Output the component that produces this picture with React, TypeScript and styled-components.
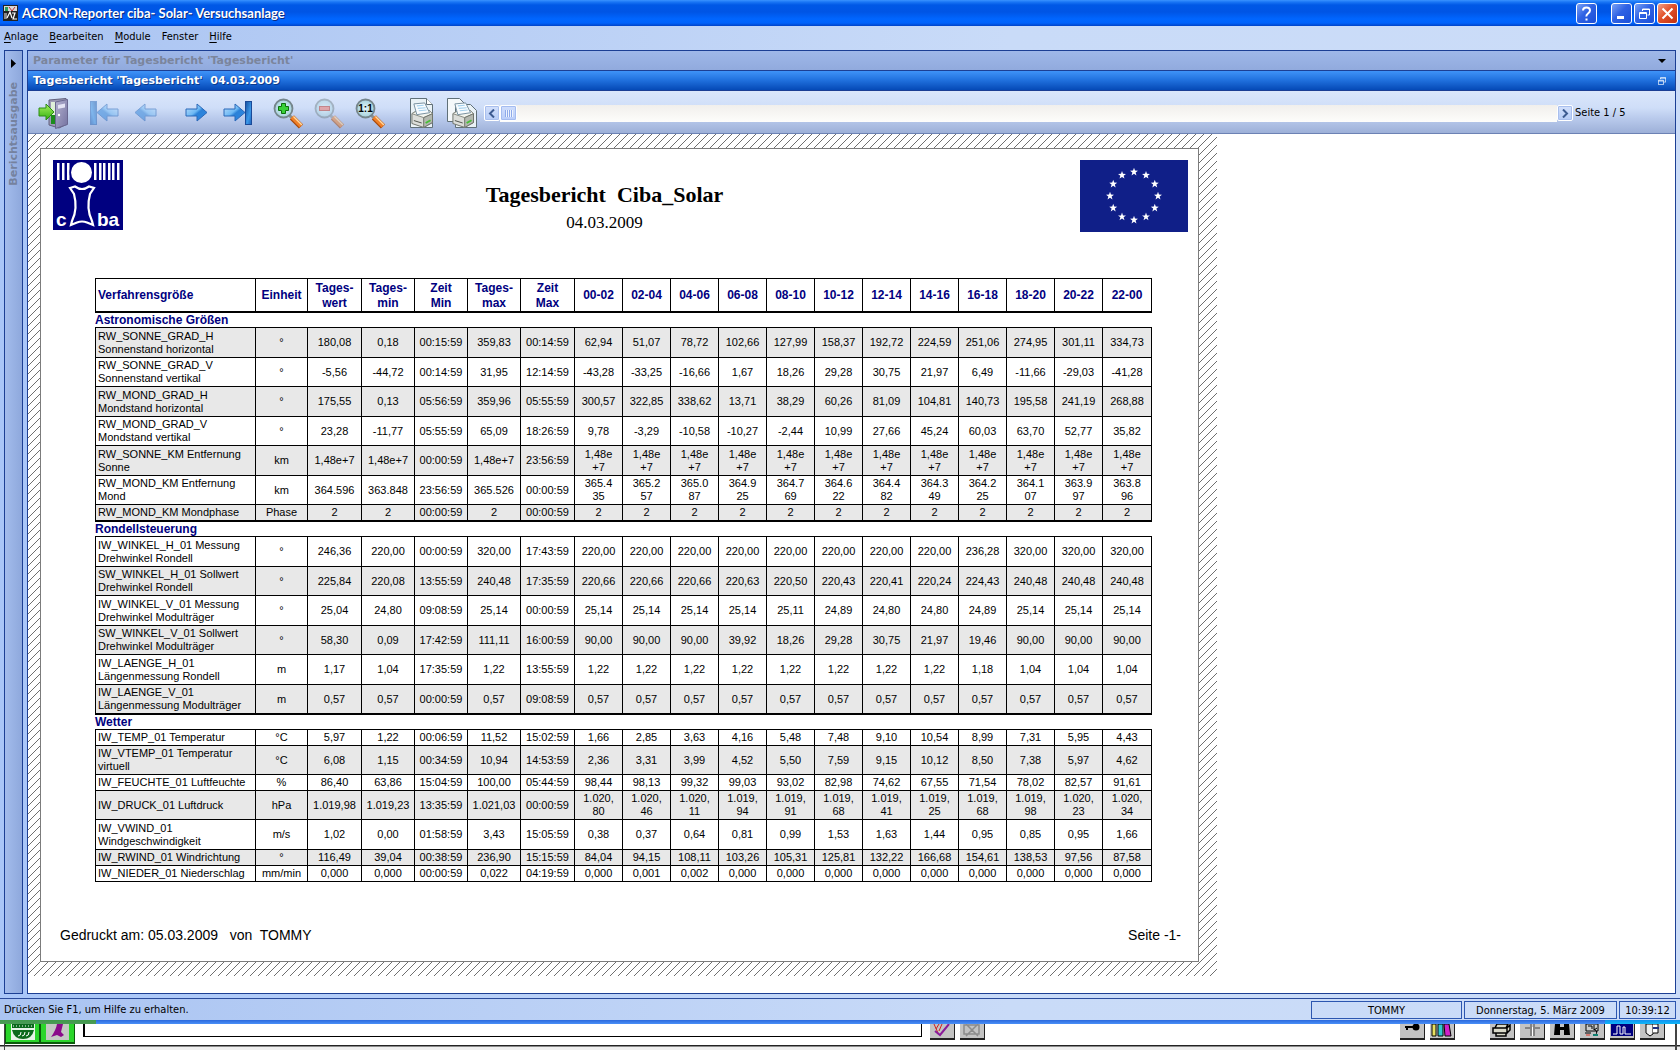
import React from 'react';
import styled, { createGlobalStyle, css } from 'styled-components';

const UI = "'DejaVu Sans Condensed', 'DejaVu Sans', sans-serif";
const CAPTION = "'DejaVu Sans', sans-serif";
const ARIAL = "'Liberation Sans', Arial, sans-serif";
const TIMES = "'Liberation Serif', 'Times New Roman', serif";
const LINE = '#1c3f94';

const GlobalStyle = createGlobalStyle`
  *, *::before, *::after { box-sizing: border-box; }
  html, body { margin: 0; height: 100%; overflow: hidden; }
  body { font: 11px/14px ${ARIAL}; color: #000; background: #fff; }
  button { font: inherit; color: inherit; margin: 0; padding: 0; border: 0; background: none; }
  svg { display: block; }
`;

const Screen = styled.div`
  display: flex;
  flex-direction: column;
  height: 100vh;
`;

/* ---------- window frame ---------- */

const TitleBar = styled.header`
  display: flex;
  align-items: center;
  flex: none;
  height: 26px;
  padding: 0 2px 0 3px;
  gap: 4px;
  background: linear-gradient(#3a93ff 0, #1a76f5 2px, #0058e6 5px, #0055e5 12px, #0066ff 19px, #0062fb 23px, #0043c8 26px);
`;

const WindowTitle = styled.h1`
  flex: 1;
  margin: 0;
  font: bold 13px/20px Lato, 'Open Sans', sans-serif;
  color: #fff;
  text-shadow: 1px 1px 0 #0a2a80;
`;

const WindowButtons = styled.div`
  display: flex;
  gap: 2px;
`;

const WindowButton = styled.button<{ $kind?: 'help' | 'close' }>`
  display: grid;
  place-items: center;
  width: 21px;
  height: 21px;
  border: 1px solid #fff;
  border-radius: 3px;
  color: #fff;
  background: ${(p) =>
    p.$kind === 'close'
      ? 'linear-gradient(135deg, #f0a088, #e2512a 45%, #c03010)'
      : 'linear-gradient(135deg, #7ba2f5, #2f62e4 45%, #1b4fd8)'};
  ${(p) => p.$kind === 'help' && css`margin-right: 12px;`}
`;

const MenuBar = styled.nav`
  display: flex;
  align-items: center;
  flex: none;
  gap: 11px;
  height: 24px;
  padding: 0 4px 3px;
  background: linear-gradient(90deg, #aac4f2, #c9dbf8 60%, #cbdcf8);
`;

const MenuItem = styled.button`
  font: 11px/16px ${UI};
  u { text-underline-offset: 2px; }
`;

const Workspace = styled.main`
  display: flex;
  flex: 1;
  min-height: 0;
  gap: 4px;
  padding: 0 4px 4px;
  background: linear-gradient(90deg, #a9c6f8, #c9dbf8 60%, #cbdcf8);
`;

const SideTab = styled.button`
  display: flex;
  flex-direction: column;
  align-items: center;
  flex: none;
  gap: 14px;
  width: 19px;
  padding: 8px 0;
  border: 1px solid ${LINE};
  background: linear-gradient(90deg, #a3bcec, #8ea8dc);
`;

const SideLabel = styled.span`
  writing-mode: vertical-rl;
  transform: rotate(180deg);
  font: bold 11px/14px ${CAPTION};
  color: #75829f;
`;

const Panel = styled.section`
  display: flex;
  flex: 1;
  flex-direction: column;
  min-width: 0;
  border: 1px solid ${LINE};
  background: #fff;
`;

const Caption = styled.div<{ $active?: boolean }>`
  display: flex;
  align-items: center;
  justify-content: space-between;
  flex: none;
  height: 20px;
  padding: 0 8px 0 5px;
  border-bottom: 1px solid ${LINE};
  font: bold 11px/14px ${CAPTION};
  white-space: pre;
  color: ${(p) => (p.$active ? '#fff' : '#7b859c')};
  text-shadow: ${(p) => (p.$active ? '1px 1px 0 #0b3a8c' : 'none')};
  background: ${(p) =>
    p.$active ? 'linear-gradient(#3f93f8, #2273e0 45%, #0549b6)' : 'linear-gradient(#9fb8e9, #91aadd)'};
`;

const CaptionButton = styled.button`
  display: grid;
  place-items: center;
  width: 10px;
  height: 12px;
`;

/* ---------- toolbar ---------- */

const Toolbar = styled.div`
  display: flex;
  align-items: center;
  flex: none;
  gap: 10px;
  height: 43px;
  padding: 2px 51px 0 5px;
  border-bottom: 1px solid #6c82b4;
  background: linear-gradient(#dbe7fb, #cfdef8 40%, #b9caec 65%, #9db0d8);
`;

const ToolGroup = styled.div`
  display: flex;
  flex: none;
`;

const ToolButton = styled.button`
  display: grid;
  place-items: center;
  width: 41px;
  height: 36px;
  &:disabled { opacity: 0.5; }
`;

const Pager = styled.div`
  display: flex;
  align-items: center;
  flex: 1;
  margin-left: -9px;
`;

const ScrollButton = styled.button`
  display: grid;
  place-items: center;
  flex: none;
  width: 16px;
  height: 16px;
  border: 1px solid #fff;
  border-radius: 2px;
  background: linear-gradient(#d3e0fc, #b5cbf6);
  box-shadow: inset 0 0 0 1px #a9bfee;
`;

const PageSlider = styled.input`
  flex: 1;
  min-width: 0;
  height: 17px;
  margin: 0;
  appearance: none;
  background: linear-gradient(#f1efec, #fdfdfb);
  &::-webkit-slider-thumb {
    appearance: none;
    width: 17px;
    height: 16px;
    border: 1px solid #fff;
    border-radius: 2px;
    background:
      repeating-linear-gradient(90deg, #8eaaea 0 1px, #eef4fe 1px 2px) center / 8px 7px no-repeat,
      linear-gradient(#d0defc, #b9cdf9);
    box-shadow: inset 0 0 0 1px #a4bcf0;
  }
`;

const PageCount = styled.output`
  flex: none;
  width: 49px;
  margin-left: 2px;
  font: 11px/14px ${UI};
  white-space: nowrap;
`;

/* ---------- report sheet ---------- */

const Viewport = styled.div`
  flex: 1;
  min-height: 0;
  overflow: hidden;
  background: #fff;
`;

const Desk = styled.div`
  width: 1189px;
  padding: 14px 18px 14px 12px;
  background: linear-gradient(135deg, transparent 45%, #6f6f6f 45% 55%, transparent 55%) 0 0 / 8px 8px #fff;
`;

const Sheet = styled.article`
  padding: 11px 10px 16px 12px;
  border: 1px solid #7c7c7c;
  background: #fff;
`;

const SheetHeader = styled.header`
  display: flex;
  align-items: flex-start;
  justify-content: space-between;
  height: 118px;
`;

const Heading = styled.div`
  padding: 21px 0 0 6px;
  text-align: center;
`;

const ReportTitle = styled.h2`
  margin: 0;
  font: bold 22px/28px ${TIMES};
  white-space: pre;
`;

const ReportDate = styled.p`
  margin: 0;
  font: 17px/28px ${TIMES};
`;

const Report = styled.table`
  table-layout: fixed;
  width: 1057px;
  margin-left: 42px;
  border-spacing: 0;
  font: 11px/13px ${ARIAL};
`;

const Col = styled.col<{ $w: number }>`
  width: ${(p) => p.$w}px;
`;

const HeadCell = styled.th`
  height: 35px;
  padding: 1px 0 0;
  border: solid #000;
  border-width: 1px 1px 2px 0;
  font: bold 12px/15px ${ARIAL};
  color: #000080;
  white-space: pre-line;
  &:first-child {
    padding-left: 2px;
    border-left-width: 1px;
    text-align: left;
  }
`;

const GroupTitle = styled.th`
  height: 15px;
  padding: 0;
  border-bottom: 1px solid #000;
  font: bold 12px/14px ${ARIAL};
  color: #000080;
  text-align: left;
`;

const Cell = styled.td`
  padding: 0;
  border: solid #000;
  border-width: 0 1px 1px 0;
  text-align: center;
  white-space: pre-line;
`;

const NameCell = styled.th`
  padding: 0 0 0 2px;
  border: solid #000;
  border-width: 0 1px 1px 1px;
  font-weight: normal;
  text-align: left;
  white-space: pre-line;
`;

const Row = styled.tr<{ $height: number; $shaded: boolean; $closing: boolean }>`
  height: ${(p) => p.$height}px;
  background: ${(p) => (p.$shaded ? '#e8e8e8' : '#fff')};
  ${(p) => p.$closing && css`
    ${Cell}, ${NameCell} { border-bottom-width: 2px; }
  `}
`;

const SheetFooter = styled.footer`
  display: flex;
  justify-content: space-between;
  padding: 43px 7px 0 7px;
  font: 14px/20px ${ARIAL};
  white-space: pre;
`;

/* ---------- status bar and the window behind ---------- */

const StatusBar = styled.footer`
  display: flex;
  align-items: center;
  flex: none;
  gap: 2px;
  height: 22px;
  padding: 0 4px;
  border-top: 1px solid #2a4a9a;
  font: 11px/14px ${UI};
  background: linear-gradient(90deg, #aac4f2, #c9dbf8 60%, #cbdcf8);
`;

const StatusHint = styled.span`
  flex: 1;
`;

const StatusCell = styled.span<{ $w: number }>`
  width: ${(p) => p.$w}px;
  height: 18px;
  border: 1px solid #2c56b0;
  line-height: 17px;
  text-align: center;
`;

const FrameEdge = styled.div`
  flex: none;
  height: 4px;
  background:
    linear-gradient(#3f9a4a, #4c9a58) left / 96px 100% no-repeat,
    linear-gradient(#1090f0, #10b8f8) right / 75px 100% no-repeat,
    linear-gradient(#2a68dc, #4a90f8);
`;

const BackWindow = styled.div`
  display: flex;
  flex: none;
  height: 26px;
  padding: 0 3px 0 4px;
  background: linear-gradient(#fff 0 21px, #222 21px 22px, #8a8a8a 22px 23px, #eee 23px);
`;

const BackFrame = styled.div`
  display: flex;
  flex: 1;
  padding-right: 10px;
  border: solid #444;
  border-width: 0 2px 0 1px;
`;

const GreenButton = styled.button`
  display: flex;
  justify-content: center;
  width: 35px;
  height: 20px;
  border: solid #0a5a0a;
  border-width: 0 1px 2px;
  background: #2bd52b;
`;

const BackField = styled.input`
  flex: 0 1 839px;
  min-width: 0;
  height: 13px;
  margin: 0 8px;
  padding: 0;
  border: solid #000;
  border-width: 0 1px 1px 2px;
  background: #fff;
`;

const BackTools = styled.div<{ $end?: boolean; $apart?: boolean }>`
  display: flex;
  gap: 5px;
  ${(p) => p.$end && css`margin-left: auto;`}
  ${(p) => p.$apart && css`margin-left: 35px;`}
`;

const BackButton = styled.button`
  display: flex;
  justify-content: center;
  width: 25px;
  height: 16px;
  border: solid #222;
  border-width: 0 1px 2px 0;
  background: #c3c3c3;
`;

/* ---------- drawings ---------- */

const RightArrow = ({ x = 0 }: { x?: number }) => (
  <path d={`M${x} 9h11V4l10 8.500-10 8.500v-5h-11z`} fill="url(#arrowFill)" stroke="#2a68b8" />
);

const Defs = () => (
  <svg width="0" height="0" style={{ position: 'absolute' }} aria-hidden="true">
    <defs>
      <linearGradient id="arrowFill" x1="0" y1="0" x2="1" y2="1">
        <stop offset="0" stopColor="#c4e2fc" />
        <stop offset=".45" stopColor="#6cb8f4" />
        <stop offset=".55" stopColor="#2c82d8" />
        <stop offset="1" stopColor="#2c88e4" />
      </linearGradient>
      <linearGradient id="barFill" x1="0" y1="0" x2="1" y2="1">
        <stop offset="0" stopColor="#1450a0" />
        <stop offset=".6" stopColor="#3c98e8" />
        <stop offset="1" stopColor="#1c60b8" />
      </linearGradient>
      <linearGradient id="doorFill" x1="0" y1="0" x2="1" y2="1">
        <stop offset="0" stopColor="#b4b2d0" />
        <stop offset="1" stopColor="#7472a0" />
      </linearGradient>
      <linearGradient id="greenFill" x1="0" y1="0" x2="0" y2="1">
        <stop offset="0" stopColor="#a8f060" />
        <stop offset="1" stopColor="#30b010" />
      </linearGradient>
      <radialGradient id="lensFill">
        <stop offset="0" stopColor="#e4f6f8" />
        <stop offset="1" stopColor="#a4d0dc" />
      </radialGradient>
    </defs>
  </svg>
);

const ExitIcon = () => (
  <svg width="31" height="31" viewBox="0 0 31 31">
    <path d="M11 2l17-1.500 1 1.500v24l-8 4-10-3z" fill="#9c9ab4" stroke="#62607c" />
    <path d="M13 4h6v22h-6z" fill="#dff0d8" />
    <path d="M13 17h5v9h-5z" fill="#1c8c1c" />
    <path d="M17.500 4l12-2.500v25l-12 4z" fill="url(#doorFill)" stroke="#6a6890" />
    <path d="M20 7l7-1.500v4l-7 1.200z" fill="#e4e4f4" />
    <circle cx="21" cy="17" r="1.200" fill="#fff" />
    <path d="M1 10h7V6l8 8-8 8v-4H1z" fill="url(#greenFill)" stroke="#2c8c14" />
  </svg>
);

const FirstIcon = () => (
  <svg width="29" height="26" viewBox="0 0 29 26">
    <g transform="matrix(-1 0 0 1 29 0)">
      <RightArrow x={1} />
      <rect x="22.500" y="1.500" width="6" height="23" fill="url(#barFill)" stroke="#2a68b8" />
    </g>
  </svg>
);
const PrevIcon = () => (
  <svg width="23" height="26" viewBox="0 0 23 26">
    <g transform="matrix(-1 0 0 1 23 0)"><RightArrow x={1} /></g>
  </svg>
);
const NextIcon = () => (
  <svg width="23" height="26" viewBox="0 0 23 26"><RightArrow x={1} /></svg>
);
const LastIcon = () => (
  <svg width="29" height="26" viewBox="0 0 29 26">
    <RightArrow x={1} />
    <rect x="22.500" y="1.500" width="6" height="23" fill="url(#barFill)" stroke="#1a4a98" />
  </svg>
);

const LensIcon = ({ mark }: { mark: 'plus' | 'minus' | 'one' }) => (
  <svg width="31" height="31" viewBox="0 0 31 31">
    <path d="M16 17l4 4" stroke="#8a9090" strokeWidth="3" />
    <path d="M19 19.500l9 9" stroke="#a84808" strokeWidth="6" />
    <path d="M19 19l9 9" stroke="#f08028" strokeWidth="4" />
    <path d="M20.500 18.500l8.500 8.500" stroke="#fdd8a0" strokeWidth="1.500" />
    <circle cx="10.500" cy="10.500" r="9" fill="url(#lensFill)" stroke="#76868c" strokeWidth="1.800" />
    {mark === 'plus' && <path d="M8.500 5.500h4v3h3v4h-3v3h-4v-3h-3v-4h3z" fill="#38d038" stroke="#0c700c" />}
    {mark === 'minus' && <rect x="5.500" y="8.500" width="10" height="4" fill="#f07060" stroke="#b83020" />}
    {mark === 'one' && (
      <text x="10.500" y="14" textAnchor="middle" fontFamily="Liberation Sans, sans-serif" fontWeight="bold" fontSize="10">1:1</text>
    )}
  </svg>
);

const Printer = () => (
  <g>
    <path d="M4 15l5-3h13l3 3v9l-9 5-12-4z" fill="#dcdeda" stroke="#70746c" />
    <path d="M4 15l5-3h13l3 3-9 4z" fill="#f2f4ee" stroke="#888c84" />
    <path d="M6 5l11-1 5 10-13 2z" fill="#f8fcff" stroke="#7890a0" />
    <path d="M9 7l7-.6M10 9.500l8-.6M11 12l8-.8" stroke="#a4d0ec" strokeWidth="1.200" />
    <path d="M16 19v10l9-5v-9z" fill="#b4b8b0" stroke="#70746c" />
    <path d="M18 24.500l5-2.800" stroke="#48c038" strokeWidth="2" />
    <path d="M6 22l8 2.500" stroke="#50544c" />
  </g>
);
const PrintPageIcon = () => (
  <svg width="28" height="32" viewBox="0 0 28 32">
    <path d="M2.500 1.500h16l6 6v23h-22z" fill="#eaf2f6" stroke="#607078" />
    <path d="M18.500 1.500v6h6" fill="#fff" stroke="#607078" />
    <g transform="matrix(.98 0 0 .98 0 2)"><Printer /></g>
  </svg>
);
const PrintAllIcon = () => (
  <svg width="31" height="32" viewBox="0 0 31 32">
    <path d="M.5 1.500h12l5 5v18H.5z" fill="#f4f8fa" stroke="#607078" />
    <path d="M8.500 7.500h15l6 6v17h-21z" fill="#eaf2f6" stroke="#607078" />
    <g transform="matrix(.98 0 0 .98 2 2)"><Printer /></g>
  </svg>
);

const RestoreGlyph = ({ size }: { size: number }) => (
  <svg width={size} height={size} viewBox="0 0 11 11" fill="none" stroke="#fff">
    <path d="M3.500 3V1h7v6h-2M3 1.500h8" />
    <path d="M.5 4.500h7v6h-7zM.5 5.500h7" />
  </svg>
);

const AppIcon = () => (
  <svg width="15" height="16" viewBox="0 0 15 16">
    <rect width="15" height="16" fill="#222" />
    <path d="M1 1h13v5H1z" fill="#d8d8d8" />
    <path d="M2 2h3v4H2z" fill="#2c9c5c" />
    <path d="M6 2l3 4 3-4" stroke="#c03030" fill="none" />
    <path d="M1 14V8h3v6z" fill="#888" />
    <path d="M4 13l3-6 2 6M9 8h3l-2 6h4" stroke="#fff" fill="none" strokeWidth="1.200" />
  </svg>
);

const CibaLogo = () => (
  <svg width="70" height="70" viewBox="0 0 70 70" role="img" aria-label="ciba">
    <rect width="70" height="70" fill="#000080" />
    <g fill="#fff">
      {[4, 9, 14, 41, 46, 50, 55, 59, 64].map((x) => (
        <rect key={x} x={x} y="3" width="2.500" height="17" />
      ))}
      <circle cx="28.500" cy="12.500" r="12" fill="#000080" />
      <circle cx="28.500" cy="12.500" r="10.500" />
      <g fontFamily="Liberation Sans, sans-serif" fontWeight="bold" fontSize="19">
        <text x="3" y="66">c</text>
        <text x="44" y="66">ba</text>
      </g>
    </g>
    <path
      d="M17 28l5-1.500q7 5 14 0l5 1.500-4 6q-4 15 2 27l1 4-6-2.500q-5-2-10 0l-6 2.500 1-4q6-12 2-27z"
      fill="none" stroke="#fff" strokeWidth="2.200"
    />
  </svg>
);

const star = (cx: number, cy: number) =>
  Array.from({ length: 10 }, (_, i) => {
    const r = i % 2 ? 1.7 : 4.2;
    const a = (i * Math.PI) / 5;
    return `${(cx + r * Math.sin(a)).toFixed(2)},${(cy - r * Math.cos(a)).toFixed(2)}`;
  }).join(' ');

const EuFlag = () => (
  <svg width="108" height="72" viewBox="0 0 108 72" role="img" aria-label="EU">
    <rect width="108" height="72" fill="#101f88" />
    {Array.from({ length: 12 }, (_, i) => (
      <polygon
        key={i}
        fill="#fff"
        points={star(54 + 24 * Math.sin((i * Math.PI) / 6), 36 - 24 * Math.cos((i * Math.PI) / 6))}
      />
    ))}
  </svg>
);

const Glyph = ({ children }: { children: React.ReactNode }) => (
  <svg width="22" height="14" viewBox="0 0 22 14">{children}</svg>
);

/* ---------- data ---------- */

type Group = { title: string; firstShaded: boolean; rows: string[] };

const HEAD = 'Verfahrensgröße|Einheit|Tages-\nwert|Tages-\nmin|Zeit\nMin|Tages-\nmax|Zeit\nMax|00-02|02-04|04-06|06-08|08-10|10-12|12-14|14-16|16-18|18-20|20-22|22-00'.split('|');

const COLS = [161, 52, 54, 53, 53, 53, 54, 48, 48, 48, 48, 48, 48, 48, 48, 48, 48, 48, 49];

const GROUPS: Group[] = [
  {
    title: 'Astronomische Größen',
    firstShaded: true,
    rows: [
      'RW_SONNE_GRAD_H\nSonnenstand horizontal|°|180,08|0,18|00:15:59|359,83|00:14:59|62,94|51,07|78,72|102,66|127,99|158,37|192,72|224,59|251,06|274,95|301,11|334,73',
      'RW_SONNE_GRAD_V\nSonnenstand vertikal|°|-5,56|-44,72|00:14:59|31,95|12:14:59|-43,28|-33,25|-16,66|1,67|18,26|29,28|30,75|21,97|6,49|-11,66|-29,03|-41,28',
      'RW_MOND_GRAD_H\nMondstand horizontal|°|175,55|0,13|05:56:59|359,96|05:55:59|300,57|322,85|338,62|13,71|38,29|60,26|81,09|104,81|140,73|195,58|241,19|268,88',
      'RW_MOND_GRAD_V\nMondstand vertikal|°|23,28|-11,77|05:55:59|65,09|18:26:59|9,78|-3,29|-10,58|-10,27|-2,44|10,99|27,66|45,24|60,03|63,70|52,77|35,82',
      'RW_SONNE_KM Entfernung\nSonne|km|1,48e+7|1,48e+7|00:00:59|1,48e+7|23:56:59' + '|1,48e\n+7'.repeat(12),
      'RW_MOND_KM Entfernung\nMond|km|364.596|363.848|23:56:59|365.526|00:00:59|365.4\n35|365.2\n57|365.0\n87|364.9\n25|364.7\n69|364.6\n22|364.4\n82|364.3\n49|364.2\n25|364.1\n07|363.9\n97|363.8\n96',
      'RW_MOND_KM Mondphase|Phase|2|2|00:00:59|2|00:00:59' + '|2'.repeat(12),
    ],
  },
  {
    title: 'Rondellsteuerung',
    firstShaded: false,
    rows: [
      'IW_WINKEL_H_01 Messung\nDrehwinkel Rondell|°|246,36|220,00|00:00:59|320,00|17:43:59|220,00|220,00|220,00|220,00|220,00|220,00|220,00|220,00|236,28|320,00|320,00|320,00',
      'SW_WINKEL_H_01 Sollwert\nDrehwinkel Rondell|°|225,84|220,08|13:55:59|240,48|17:35:59|220,66|220,66|220,66|220,63|220,50|220,43|220,41|220,24|224,43|240,48|240,48|240,48',
      'IW_WINKEL_V_01 Messung\nDrehwinkel Modulträger|°|25,04|24,80|09:08:59|25,14|00:00:59|25,14|25,14|25,14|25,14|25,11|24,89|24,80|24,80|24,89|25,14|25,14|25,14',
      'SW_WINKEL_V_01 Sollwert\nDrehwinkel Modulträger|°|58,30|0,09|17:42:59|111,11|16:00:59|90,00|90,00|90,00|39,92|18,26|29,28|30,75|21,97|19,46|90,00|90,00|90,00',
      'IW_LAENGE_H_01\nLängenmessung Rondell|m|1,17|1,04|17:35:59|1,22|13:55:59|1,22|1,22|1,22|1,22|1,22|1,22|1,22|1,22|1,18|1,04|1,04|1,04',
      'IW_LAENGE_V_01\nLängenmessung Modulträger|m|0,57|0,57|00:00:59|0,57|09:08:59' + '|0,57'.repeat(12),
    ],
  },
  {
    title: 'Wetter',
    firstShaded: false,
    rows: [
      'IW_TEMP_01 Temperatur|°C|5,97|1,22|00:06:59|11,52|15:02:59|1,66|2,85|3,63|4,16|5,48|7,48|9,10|10,54|8,99|7,31|5,95|4,43',
      'IW_VTEMP_01 Temperatur\nvirtuell|°C|6,08|1,15|00:34:59|10,94|14:53:59|2,36|3,31|3,99|4,52|5,50|7,59|9,15|10,12|8,50|7,38|5,97|4,62',
      'IW_FEUCHTE_01 Luftfeuchte|%|86,40|63,86|15:04:59|100,00|05:44:59|98,44|98,13|99,32|99,03|93,02|82,98|74,62|67,55|71,54|78,02|82,57|91,61',
      'IW_DRUCK_01 Luftdruck|hPa|1.019,98|1.019,23|13:35:59|1.021,03|00:00:59|1.020,\n80|1.020,\n46|1.020,\n11|1.019,\n94|1.019,\n91|1.019,\n68|1.019,\n41|1.019,\n25|1.019,\n68|1.019,\n98|1.020,\n23|1.020,\n34',
      'IW_VWIND_01\nWindgeschwindigkeit|m/s|1,02|0,00|01:58:59|3,43|15:05:59|0,38|0,37|0,64|0,81|0,99|1,53|1,63|1,44|0,95|0,85|0,95|1,66',
      'IW_RWIND_01 Windrichtung|°|116,49|39,04|00:38:59|236,90|15:15:59|84,04|94,15|108,11|103,26|105,31|125,81|132,22|166,68|154,61|138,53|97,56|87,58',
      'IW_NIEDER_01 Niederschlag|mm/min|0,000|0,000|00:00:59|0,022|04:19:59|0,000|0,001|0,002' + '|0,000'.repeat(9),
    ],
  },
];

const MENU: [string, string][] = [['A', 'nlage'], ['B', 'earbeiten'], ['M', 'odule'], ['', 'Fenster'], ['H', 'ilfe']];

const rowHeight = (text: string, index: number, closing: boolean) =>
  (text.includes('\n') ? (index % 2 ? 29 : 30) : 16) + (closing ? 1 : 0);

/* ---------- application ---------- */

const ReportTable = () => (
  <Report>
    <colgroup>{COLS.map((w, i) => <Col key={i} $w={w} />)}</colgroup>
    <thead>
      <tr>{HEAD.map((h) => <HeadCell key={h} scope="col">{h}</HeadCell>)}</tr>
    </thead>
    {GROUPS.map((group, g) => (
      <tbody key={group.title}>
        <tr><GroupTitle colSpan={COLS.length} scope="rowgroup">{group.title}</GroupTitle></tr>
        {group.rows.map((text, i) => {
          const [name, ...values] = text.split('|');
          const closing = i === group.rows.length - 1 && g < GROUPS.length - 1;
          return (
            <Row
              key={name}
              $height={rowHeight(text, i, closing)}
              $shaded={(i % 2 === 0) === group.firstShaded}
              $closing={closing}
            >
              <NameCell scope="row">{name}</NameCell>
              {values.map((v, c) => <Cell key={c}>{v}</Cell>)}
            </Row>
          );
        })}
      </tbody>
    ))}
  </Report>
);

export default function App() {
  return (
    <Screen>
      <GlobalStyle />
      <Defs />
      <TitleBar>
        <AppIcon />
        <WindowTitle>ACRON-Reporter ciba- Solar- Versuchsanlage</WindowTitle>
        <WindowButtons>
          <WindowButton $kind="help" aria-label="Hilfe">
            <svg width="13" height="15" viewBox="0 0 13 15" fill="none" stroke="#fff" strokeWidth="2">
              <path d="M3 4.500q0-3 3.500-3t3.500 3q0 1.500-2 3T6.500 10.500M6.500 12.500v2" />
            </svg>
          </WindowButton>
          <WindowButton aria-label="Minimieren">
            <svg width="13" height="13" viewBox="0 0 13 13"><path d="M2 9h7v3H2z" fill="#fff" /></svg>
          </WindowButton>
          <WindowButton aria-label="Wiederherstellen"><RestoreGlyph size={11} /></WindowButton>
          <WindowButton $kind="close" aria-label="Schließen">
            <svg width="13" height="13" viewBox="0 0 13 13"><path d="M1.500 1.500l10 10M11.500 1.500l-10 10" stroke="#fff" strokeWidth="2" /></svg>
          </WindowButton>
        </WindowButtons>
      </TitleBar>
      <MenuBar>
        {MENU.map(([key, rest]) => <MenuItem key={rest}>{key && <u>{key}</u>}{rest}</MenuItem>)}
      </MenuBar>

      <Workspace>
        <SideTab>
          <svg width="5" height="9" viewBox="0 0 5 9"><path d="M0 0l5 4.500L0 9z" /></svg>
          <SideLabel>Berichtsausgabe</SideLabel>
        </SideTab>
        <Panel>
          <Caption>
            Parameter für Tagesbericht 'Tagesbericht'
            <CaptionButton aria-label="Aufklappen">
              <svg width="8" height="4" viewBox="0 0 8 4"><path d="M0 0h8L4 4z" /></svg>
            </CaptionButton>
          </Caption>
          <Caption $active>
            {"Tagesbericht 'Tagesbericht'  04.03.2009"}
            <CaptionButton aria-label="Fenster wiederherstellen"><RestoreGlyph size={8} /></CaptionButton>
          </Caption>
          <Toolbar>
            <ToolGroup>
              <ToolButton aria-label="Beenden"><ExitIcon /></ToolButton>
            </ToolGroup>
            <ToolGroup>
              <ToolButton disabled aria-label="Erste Seite"><FirstIcon /></ToolButton>
              <ToolButton disabled aria-label="Vorherige Seite"><PrevIcon /></ToolButton>
            </ToolGroup>
            <ToolGroup>
              <ToolButton aria-label="Nächste Seite"><NextIcon /></ToolButton>
              <ToolButton aria-label="Letzte Seite"><LastIcon /></ToolButton>
            </ToolGroup>
            <ToolGroup>
              <ToolButton aria-label="Vergrößern"><LensIcon mark="plus" /></ToolButton>
              <ToolButton disabled aria-label="Verkleinern"><LensIcon mark="minus" /></ToolButton>
              <ToolButton aria-label="Originalgröße"><LensIcon mark="one" /></ToolButton>
            </ToolGroup>
            <ToolGroup>
              <ToolButton aria-label="Seite drucken"><PrintPageIcon /></ToolButton>
              <ToolButton aria-label="Alle Seiten drucken"><PrintAllIcon /></ToolButton>
            </ToolGroup>
            <Pager>
              <ScrollButton aria-label="Zurück">
                <svg width="8" height="9" viewBox="0 0 8 9"><path d="M6 .5l-4 4 4 4" fill="none" stroke="#3c5a90" strokeWidth="2" /></svg>
              </ScrollButton>
              <PageSlider type="range" min={1} max={5} defaultValue={1} aria-label="Seite" />
              <ScrollButton aria-label="Weiter">
                <svg width="8" height="9" viewBox="0 0 8 9"><path d="M2 .5l4 4-4 4" fill="none" stroke="#3c5a90" strokeWidth="2" /></svg>
              </ScrollButton>
              <PageCount>Seite 1 / 5</PageCount>
            </Pager>
          </Toolbar>
          <Viewport>
            <Desk>
              <Sheet>
                <SheetHeader>
                  <CibaLogo />
                  <Heading>
                    <ReportTitle>{'Tagesbericht  Ciba_Solar'}</ReportTitle>
                    <ReportDate>04.03.2009</ReportDate>
                  </Heading>
                  <EuFlag />
                </SheetHeader>
                <ReportTable />
                <SheetFooter>
                  <span>{'Gedruckt am: 05.03.2009   von  TOMMY'}</span>
                  <span>Seite -1-</span>
                </SheetFooter>
              </Sheet>
            </Desk>
          </Viewport>
        </Panel>
      </Workspace>

      <StatusBar>
        <StatusHint>Drücken Sie F1, um Hilfe zu erhalten.</StatusHint>
        <StatusCell $w={151}>TOMMY</StatusCell>
        <StatusCell $w={153}>Donnerstag, 5. März 2009</StatusCell>
        <StatusCell $w={57}>10:39:12</StatusCell>
      </StatusBar>
      <FrameEdge />
      <BackWindow>
        <BackFrame>
          <GreenButton aria-label="Anlage">
            <svg width="26" height="17" viewBox="0 0 26 17">
              <path d="M1 0h24v16H1z" fill="#e8f4e8" />
              <path d="M2 0h22v4H2zM2 6h22q-2 9-11 9T2 6z" fill="#0c6a1c" />
              <path d="M3 2h20" stroke="#fff" strokeDasharray="1 2" />
              <path d="M8 12q3 0 3-4M12 12q3 0 3-4M16 12q3 0 3-4" stroke="#fff" fill="none" />
            </svg>
          </GreenButton>
          <GreenButton aria-label="Pfeil">
            <svg width="25" height="17" viewBox="0 0 25 17">
              <path d="M1 0h23v16H1z" fill="#c4c8c4" />
              <path d="M12 0h6l-2 8 3 3-3 2-4-2-6 2q5-7 6-13z" fill="#8a0a8a" />
            </svg>
          </GreenButton>
          <BackField aria-label="Eingabe" />
          <BackTools>
            <BackButton aria-label="Übernehmen">
              <Glyph><path d="M3 0l4 9M8 0l-3 5M11 0l-3 7" stroke="#d02020" /><path d="M4 7l5 4L18 0" fill="none" stroke="#8a1a9a" strokeWidth="2" /></Glyph>
            </BackButton>
            <BackButton aria-label="Verwerfen">
              <Glyph><path d="M3 1h15v9H3zM5 0l12 12M17 0L5 12" fill="none" stroke="#8c8c8c" strokeWidth="1.500" /></Glyph>
            </BackButton>
          </BackTools>
          <BackTools $end>
            <BackButton aria-label="Schlüssel">
              <Glyph><path d="M4 3h9M6 3v3" stroke="#000" strokeWidth="2" /><circle cx="15" cy="3" r="3.500" /></Glyph>
            </BackButton>
            <BackButton aria-label="Archiv">
              <Glyph>
                <g stroke="#000"><path d="M1 0h4v12H1z" fill="#e8e060" /><path d="M7 0h5v12H7z" fill="#30c8d0" /><path d="M13 0h5l2 12h-6z" fill="#d020c8" /></g>
              </Glyph>
            </BackButton>
          </BackTools>
          <BackTools $apart>
            <BackButton aria-label="Drucken">
              <Glyph><path d="M6 0h11l-2 4H4zM2 4h14v5H2zM16 4l3-3v5l-3 3M5 9h10v3H5z" fill="#d8d8c8" stroke="#000" strokeWidth="1.500" /></Glyph>
            </BackButton>
            <BackButton aria-label="Fadenkreuz">
              <Glyph><path d="M10 0v12M13 0v12M4 4h5M14 4h5" stroke="#444" /><path d="M11 3v9h1V3z" fill="#fff" /></Glyph>
            </BackButton>
            <BackButton aria-label="Suchen">
              <Glyph><path d="M4 0h5v3h4V0h5l1 11h-6V6H9v5H3z" /></Glyph>
            </BackButton>
            <BackButton aria-label="Benutzer">
              <Glyph><path d="M5 0h12v7H5z" fill="#ccc" stroke="#000" /><path d="M7 2h4v3M13 1v5l3-2" stroke="#000" fill="none" /><path d="M4 9h6M13 5q5 3 1 6" stroke="#000" fill="none" /><path d="M5 11h4" stroke="#e03020" /><path d="M12 11h5" stroke="#108070" strokeWidth="2" /></Glyph>
            </BackButton>
            <BackButton aria-label="Kurve">
              <Glyph><path d="M0 0h22v12H0z" fill="#000080" /><path d="M2 10h4V2h3v8h3V3h2v7h6" fill="none" stroke="#fff" /></Glyph>
            </BackButton>
            <BackButton aria-label="Ausgang">
              <Glyph><path d="M5 0h7v10l-3 2-4-3z" fill="#eee" stroke="#000" /><path d="M12 0h5v9h-5" fill="#fff" stroke="#000" /><path d="M12 4h6" stroke="#203080" strokeWidth="2" /></Glyph>
            </BackButton>
          </BackTools>
        </BackFrame>
      </BackWindow>
    </Screen>
  );
}
